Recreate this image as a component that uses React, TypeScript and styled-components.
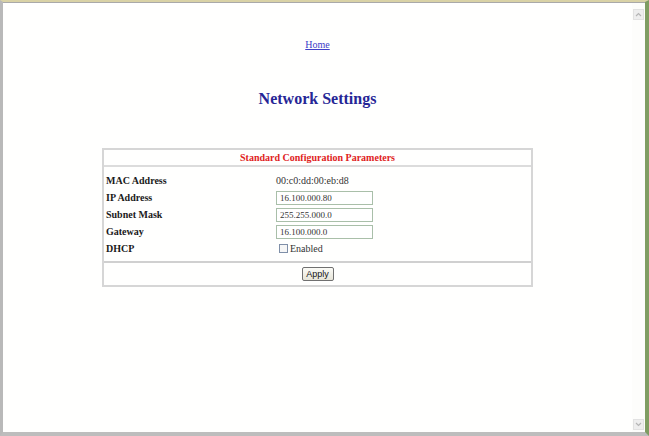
import React from "react";
import styled, { createGlobalStyle } from "styled-components";

const GlobalStyle = createGlobalStyle`
  html, body {
    margin: 0;
    padding: 0;
    background: #ffffff;
  }
  body {
    font-family: "Liberation Serif", "Times New Roman", serif;
  }
`;

const Window = styled.div`
  width: 649px;
  height: 436px;
  box-sizing: border-box;
  display: flex;
  flex-direction: column;
  border-top: 2px solid #d9d2a6;
  border-right: 4px solid #7f9d62;
  border-bottom: 4px solid #bdbdbd;
  border-left: 3px solid #b9b9b9;
  background: #ffffff;
`;

const Viewport = styled.div`
  flex: 1;
  display: flex;
  border-top: 1px solid #a9a9a9;
  min-height: 0;
`;

const Page = styled.div`
  flex: 1;
  display: flex;
  flex-direction: column;
  align-items: center;
  background: #fffffe;
`;

const Scrollbar = styled.div`
  width: 13px;
  display: flex;
  flex-direction: column;
  justify-content: space-between;
  align-items: center;
  padding: 6px 0 2px;
  background: #fdfdfb;
`;

const ScrollArrow = styled.div`
  width: 11px;
  height: 11px;
  display: flex;
  align-items: center;
  justify-content: center;
  background: #eeeeee;
  border: 1px solid #e2e2e2;
  box-sizing: border-box;
`;

const HomeLink = styled.a`
  margin-top: 36px;
  font-size: 10px;
  line-height: 12px;
  color: #4040c8;
  text-decoration: underline;

  &:visited {
    color: #4040c8;
  }
`;

const Heading = styled.h1`
  margin: 38px 0 0;
  font-size: 16px;
  line-height: 20px;
  font-weight: bold;
  color: #262696;
`;

const Panel = styled.div`
  margin-top: 39px;
  width: 431px;
  box-sizing: border-box;
  border: 2px solid #d6d6d6;
  display: flex;
  flex-direction: column;
`;

const PanelHeader = styled.div`
  height: 15px;
  display: flex;
  align-items: center;
  justify-content: center;
  font-size: 10px;
  font-weight: bold;
  color: #e02222;
  border-bottom: 2px solid #dcdcdc;
`;

const PanelBody = styled.div`
  display: grid;
  grid-template-columns: 170px 1fr;
  grid-auto-rows: 17px;
  padding: 5px 2px 4px;
  border-bottom: 2px solid #d0d0d0;
`;

const Label = styled.div`
  display: flex;
  align-items: center;
  font-size: 10px;
  font-weight: bold;
  color: #1a1a1a;
`;

const Value = styled.div`
  display: flex;
  align-items: center;
  font-size: 10px;
  color: #333333;
`;

const TextInput = styled.input`
  width: 97px;
  height: 14px;
  box-sizing: border-box;
  margin: 0;
  padding: 0 3px;
  border: 1px solid #a9bfa9;
  font-family: "Liberation Serif", "Times New Roman", serif;
  font-size: 9px;
  color: #333333;
  background: #ffffff;
  outline: none;
`;

const CheckLabel = styled.label`
  display: flex;
  align-items: center;
  gap: 2px;
  font-size: 10px;
  color: #333333;
`;

const CheckBox = styled.span`
  width: 9px;
  height: 9px;
  box-sizing: border-box;
  border: 1px solid #7f8fa8;
  background: #f6f6f6;
  margin-left: 3px;
`;

const PanelFooter = styled.div`
  height: 22px;
  display: flex;
  align-items: center;
  justify-content: center;
`;

const ApplyButton = styled.button`
  width: 32px;
  height: 14px;
  padding: 0;
  box-sizing: border-box;
  border: 1px solid #707070;
  border-radius: 2px;
  background: linear-gradient(#fbfbf7, #e6e4d8);
  font-family: "Liberation Sans", Arial, sans-serif;
  font-size: 9px;
  color: #111111;
`;

const rows = [
  { label: "IP Address", value: "16.100.000.80" },
  { label: "Subnet Mask", value: "255.255.000.0" },
  { label: "Gateway", value: "16.100.000.0" },
];

function Arrow({ up }: { up?: boolean }) {
  return (
    <ScrollArrow>
      <svg width="7" height="5" viewBox="0 0 7 5">
        <path
          d={up ? "M1 4 L3.5 1.5 L6 4" : "M1 1 L3.5 3.5 L6 1"}
          fill="none"
          stroke="#b5b5b5"
          strokeWidth="1.2"
        />
      </svg>
    </ScrollArrow>
  );
}

export default function App() {
  return (
    <>
      <GlobalStyle />
      <Window>
        <Viewport>
          <Page>
            <HomeLink href="#">Home</HomeLink>
            <Heading>Network Settings</Heading>
            <Panel>
              <PanelHeader>Standard Configuration Parameters</PanelHeader>
              <PanelBody>
                <Label>MAC Address</Label>
                <Value>00:c0:dd:00:eb:d8</Value>
                {rows.map((row) => (
                  <React.Fragment key={row.label}>
                    <Label>{row.label}</Label>
                    <Value>
                      <TextInput defaultValue={row.value} />
                    </Value>
                  </React.Fragment>
                ))}
                <Label>DHCP</Label>
                <Value>
                  <CheckLabel>
                    <CheckBox />
                    Enabled
                  </CheckLabel>
                </Value>
              </PanelBody>
              <PanelFooter>
                <ApplyButton>Apply</ApplyButton>
              </PanelFooter>
            </Panel>
          </Page>
          <Scrollbar>
            <Arrow up />
            <Arrow />
          </Scrollbar>
        </Viewport>
      </Window>
    </>
  );
}
